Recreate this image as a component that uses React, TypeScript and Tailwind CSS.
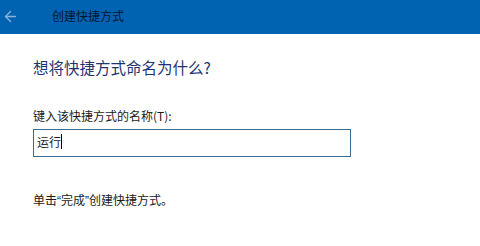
import { ArrowLeft } from "lucide-react";

const font = { fontFamily: '"Microsoft YaHei", "Noto Sans CJK SC", "Noto Sans", sans-serif' };

export default function App() {
  return (
    <div className="h-[246px] w-[480px] overflow-hidden bg-white" style={font}>
      {/* title bar */}
      <div className="flex h-[34px] items-center bg-[#0063b1] text-[#08142e]">
        <div className="flex w-[52px] items-center pl-[2px] pb-[2px]">
          <ArrowLeft className="h-[17px] w-[17px] text-[#8fb2dc]" strokeWidth={1.8} />
        </div>
        <span className="pb-[3px] text-[12px] leading-[16px]">创建快捷方式</span>
      </div>

      <div className="pl-[33px]">
        <h1 className="mt-[23px] text-[15.5px] leading-[20px] text-[#1f3570]">想将快捷方式命名为什么?</h1>

        <label className="mt-[31px] block text-[12px] leading-[16px] text-[#1a1a1a]">键入该快捷方式的名称(T):</label>
        <div className="mt-[5px] flex h-[28px] w-[318px] items-start border border-[#3a6c92] pl-[3px] pt-[3px]">
          <span className="text-[12px] leading-[18px] text-[#1a1a1a]">运行</span>
          <span className="mt-[1px] h-[15px] w-[1px] bg-black" />
        </div>

        <p className="mt-[35px] text-[12px] leading-[16px] text-[#1a1a1a]">
          单击<span style={{ fontFamily: '"Liberation Sans", sans-serif' }}>“</span>完成
          <span style={{ fontFamily: '"Liberation Sans", sans-serif' }}>”</span>创建快捷方式。
        </p>
      </div>
    </div>
  );
}
